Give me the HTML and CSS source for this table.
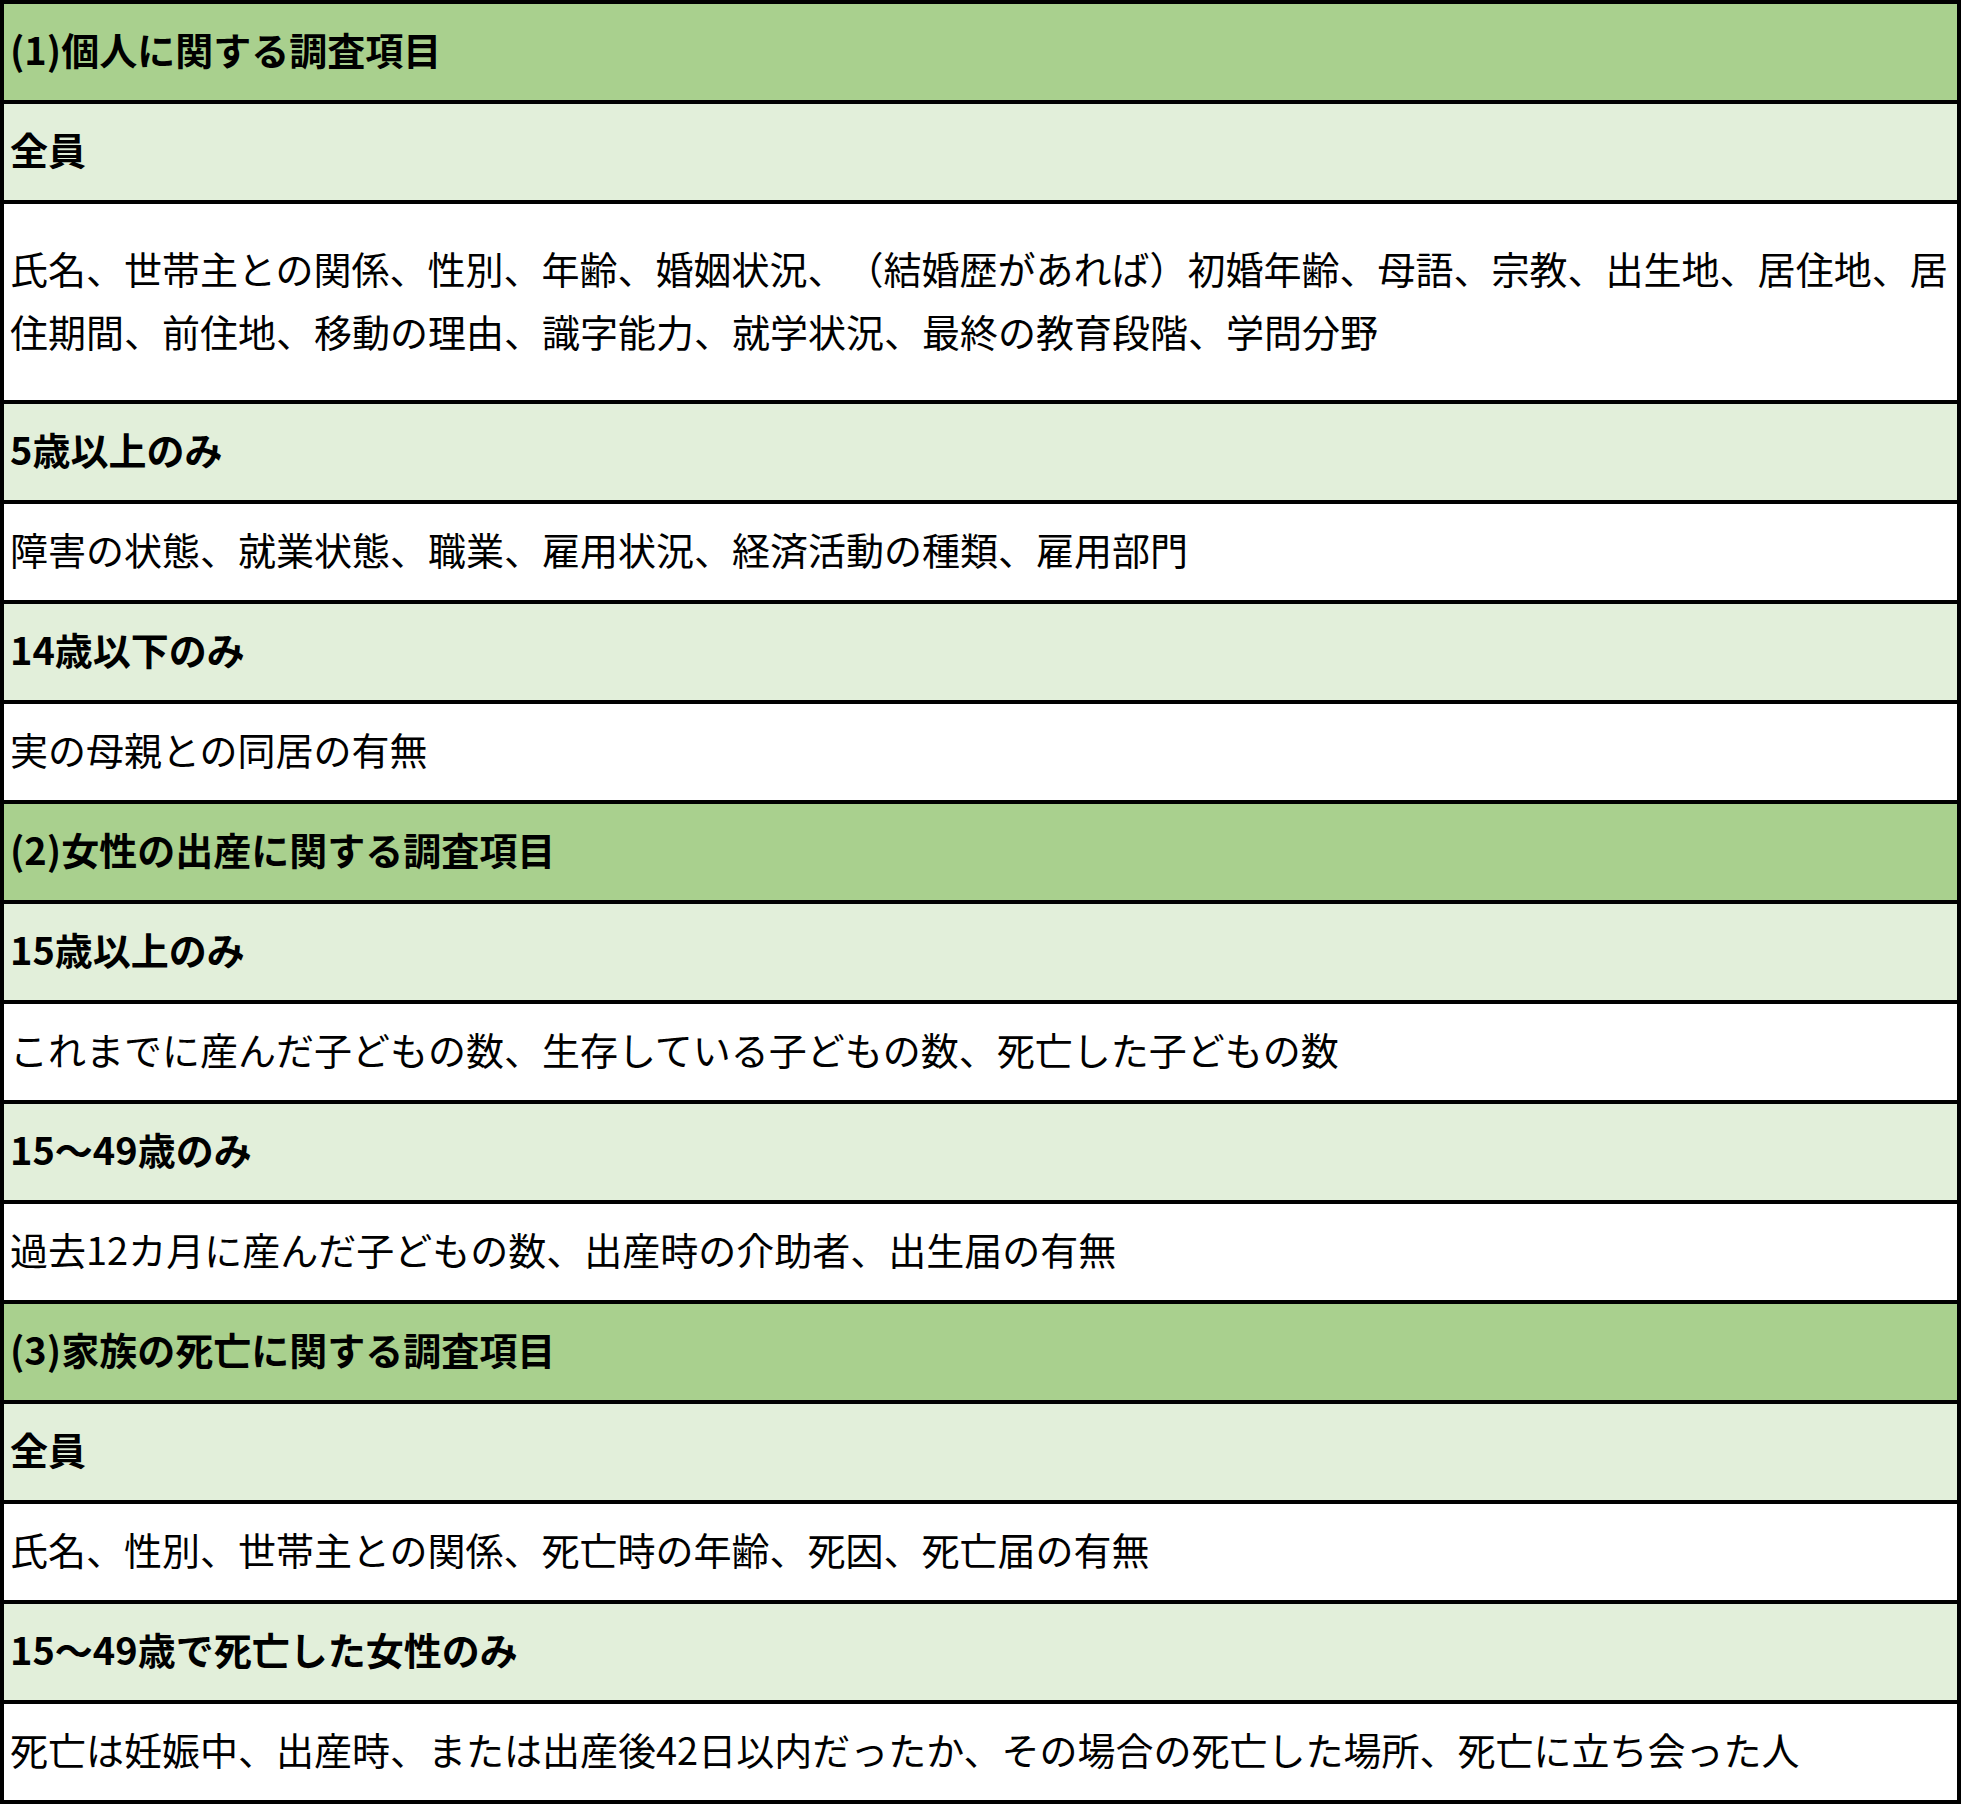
FILE: index.html
```html
<!DOCTYPE html>
<html lang="ja">
<head>
<meta charset="utf-8">
<title>調査項目</title>
<link rel="stylesheet" href="styles.css">
</head>
<body>
<div class="sheet">
  <div class="row sec">(1)個人に関する調査項目</div>
  <div class="row sub">全員</div>
  <div class="row item tall">氏名、世帯主との関係、性別、年齢、婚姻状況、（結婚歴があれば）初婚年齢、母語、宗教、出生地、居住地、居住期間、前住地、移動の理由、識字能力、就学状況、最終の教育段階、学問分野</div>
  <div class="row sub">5歳以上のみ</div>
  <div class="row item">障害の状態、就業状態、職業、雇用状況、経済活動の種類、雇用部門</div>
  <div class="row sub">14歳以下のみ</div>
  <div class="row item">実の母親との同居の有無</div>
  <div class="row sec">(2)女性の出産に関する調査項目</div>
  <div class="row sub">15歳以上のみ</div>
  <div class="row item">これまでに産んだ子どもの数、生存している子どもの数、死亡した子どもの数</div>
  <div class="row sub">15～49歳のみ</div>
  <div class="row item">過去12カ月に産んだ子どもの数、出産時の介助者、出生届の有無</div>
  <div class="row sec">(3)家族の死亡に関する調査項目</div>
  <div class="row sub">全員</div>
  <div class="row item">氏名、性別、世帯主との関係、死亡時の年齢、死因、死亡届の有無</div>
  <div class="row sub">15～49歳で死亡した女性のみ</div>
  <div class="row item">死亡は妊娠中、出産時、または出産後42日以内だったか、その場合の死亡した場所、死亡に立ち会った人</div>
</div>
</body>
</html>
```

FILE: styles.css
```css
html, body {
  margin: 0;
  padding: 0;
  background: #ffffff;
}

body {
  font-family: "Noto Sans CJK JP", "Noto Sans", sans-serif;
  color: #000000;
}

.sheet {
  box-sizing: border-box;
  width: 1961px;
  border-top: 4px solid #000000;
  border-left: 4px solid #000000;
  border-right: 4px solid #000000;
  display: flex;
  flex-direction: column;
}

.row {
  box-sizing: border-box;
  height: 100px;
  border-bottom: 4px solid #000000;
  display: flex;
  align-items: center;
  padding: 0 2px 8px 6px;
  font-size: 38px;
  line-height: 63px;
  white-space: normal;
  text-spacing-trim: space-all;
}

.row.tall {
  height: 200px;
  padding-bottom: 6px;
}

.sec {
  background: #a9d08e;
  font-weight: 700;
}

.sub {
  background: #e2efda;
  font-weight: 700;
}

.item {
  background: #ffffff;
  font-weight: 400;
}
```
